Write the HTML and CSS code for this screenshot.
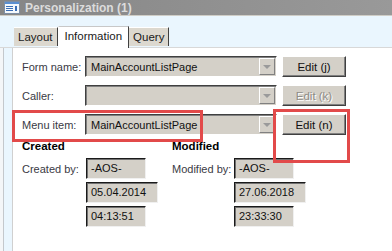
FILE: index.html
```html
<!DOCTYPE html>
<html lang="en">
<head>
    <meta charset="UTF-8">
    <title>Personalization (1)</title>
    <link rel="stylesheet" href="styles.css">
</head>
<body>
    <div class="window">
        <div class="titlebar">
            <svg class="app-icon" width="16" height="13" viewBox="0 0 16 13">
                <rect x="0.5" y="0.5" width="15" height="12" fill="#f4f8fc" stroke="#7d8ea4"/>
                <rect x="1" y="1" width="14" height="2" fill="#5b8fd0"/>
                <rect x="2" y="5" width="7" height="1" fill="#3a6fb8"/>
                <rect x="2" y="7" width="7" height="1" fill="#3a6fb8"/>
                <rect x="2" y="9" width="7" height="1" fill="#3a6fb8"/>
                <rect x="11" y="5" width="2" height="5" fill="#3a6fb8"/>
            </svg>
            <span class="title">Personalization (1)</span>
        </div>

        <div class="tabstrip">
            <div class="tab">Layout</div>
            <div class="tab active">Information</div>
            <div class="tab">Query</div>
        </div>

        <div class="main">
            <div class="rail"></div>
            <div class="panel">
                <div class="row">
                    <span class="label">Form name:</span>
                    <div class="combo"><span class="combo-text">MainAccountListPage</span><span class="drop"><i></i></span></div>
                    <div class="btn">Edit (j)</div>
                </div>
                <div class="row">
                    <span class="label">Caller:</span>
                    <div class="combo"><span class="combo-text"></span><span class="drop"><i></i></span></div>
                    <div class="btn disabled">Edit (k)</div>
                </div>
                <div class="row">
                    <span class="label">Menu item:</span>
                    <div class="combo"><span class="combo-text">MainAccountListPage</span><span class="drop"><i></i></span></div>
                    <div class="btn">Edit (n)</div>
                </div>

                <div class="stamps">
                    <div class="stamp">
                        <div class="stamp-title">Created</div>
                        <div class="stamp-row">
                            <span class="stamp-label">Created by:</span>
                            <div class="field">-AOS-</div>
                        </div>
                        <div class="stamp-row">
                            <span class="stamp-label"></span>
                            <div class="field wide">05.04.2014</div>
                        </div>
                        <div class="stamp-row">
                            <span class="stamp-label"></span>
                            <div class="field">04:13:51</div>
                        </div>
                    </div>
                    <div class="stamp">
                        <div class="stamp-title">Modified</div>
                        <div class="stamp-row">
                            <span class="stamp-label">Modified by:</span>
                            <div class="field">-AOS-</div>
                        </div>
                        <div class="stamp-row">
                            <span class="stamp-label"></span>
                            <div class="field wide">27.06.2018</div>
                        </div>
                        <div class="stamp-row">
                            <span class="stamp-label"></span>
                            <div class="field">23:33:30</div>
                        </div>
                    </div>
                </div>

                <div class="mark mark-menu"></div>
                <div class="mark mark-edit"></div>
            </div>
        </div>
    </div>
</body>
</html>
```

FILE: styles.css
```css
body {
    margin: 0;
    padding: 0;
    font-family: 'Liberation Sans', Arial, sans-serif;
    font-size: 11px;
    color: #1a1a1a;
    overflow: hidden;
}
.window {
    width: 392px;
    height: 251px;
    background: #ffffff;
    overflow: hidden;
}
.titlebar {
    height: 16px;
    background: linear-gradient(90deg, #868686 0%, #999999 100%);
    border-bottom: 1px solid #cfcdc6;
    display: flex;
    align-items: center;
    gap: 5px;
    padding-left: 4px;
    box-sizing: border-box;
}
.app-icon {
    flex: none;
}
.title {
    font-weight: bold;
    font-size: 12px;
    color: #dcdcdc;
}
.tabstrip {
    height: 32px;
    background: #eaf6fe;
    display: flex;
    align-items: flex-end;
    padding-left: 14px;
    border-bottom: 1px solid #d8d8d8;
    box-sizing: border-box;
}
.tab {
    height: 18px;
    line-height: 18px;
    padding: 0 4px;
    margin-bottom: 1px;
    background: #dcd8cf;
    border-top: 1px solid #ffffff;
    border-right: 1px solid #404040;
    color: #1a1a1a;
    font-size: 11.5px;
}
.tab.active {
    height: 21px;
    line-height: 19px;
    margin-bottom: -1px;
    padding: 0 6px;
    background: #ffffff;
    border-top: 1px solid #c8c8c8;
    border-left: 1px solid #ffffff;
    position: relative;
    z-index: 1;
}
.main {
    display: flex;
    height: 203px;
}
.rail {
    width: 12px;
    flex: none;
    background: #eaf6fe;
    border-left: 3px solid #f4f6f8;
    box-shadow: inset 1px 0 0 #c4c8cc;
    box-sizing: border-box;
}
.panel {
    flex: 1;
    border-left: 1px solid #d0d0d0;
    padding: 8px 0 0 9px;
    position: relative;
}
.row {
    display: flex;
    align-items: center;
    height: 21px;
    margin-bottom: 8px;
}
.label {
    flex: none;
    width: 63px;
    white-space: nowrap;
    color: #3a3a44;
    font-size: 11px;
}
.combo {
    flex: none;
    width: 192px;
    height: 21px;
    box-sizing: border-box;
    display: flex;
    align-items: center;
    background: #d4d0c8;
    border: 1px solid;
    border-color: #404040 #ffffff #ffffff #404040;
    box-shadow: inset 1px 1px 0 #808080;
}
.combo-text {
    flex: 1;
    padding-left: 5px;
    font-size: 11px;
    white-space: nowrap;
    color: #111;
}
.drop {
    flex: none;
    width: 16px;
    height: 17px;
    margin-right: 1px;
    box-sizing: border-box;
    background: #d4d0c8;
    border: 1px solid;
    border-color: #ffffff #808080 #808080 #ffffff;
    display: flex;
    align-items: center;
    justify-content: center;
}
.drop i {
    width: 0;
    height: 0;
    border-left: 4px solid transparent;
    border-right: 4px solid transparent;
    border-top: 4px solid #9a9a9a;
}
.btn {
    flex: none;
    margin-left: 5px;
    width: 64px;
    height: 21px;
    box-sizing: border-box;
    background: #d4d0c8;
    border: 1px solid;
    border-color: #ffffff #404040 #404040 #ffffff;
    box-shadow: inset -1px -1px 0 #808080;
    display: flex;
    align-items: center;
    justify-content: center;
    font-size: 11.5px;
    color: #111;
}
.btn.disabled {
    color: #8f8c86;
    text-shadow: 1px 1px 0 #ffffff;
}
.stamps {
    display: flex;
    margin-top: -3px;
}
.stamp {
    flex: none;
    width: 150px;
}
.stamp-title {
    font-weight: bold;
    font-size: 11.5px;
    color: #000;
    height: 14px;
    margin-bottom: 4px;
}
.stamp-row {
    display: flex;
    align-items: center;
    height: 21px;
    margin-bottom: 3px;
}
.stamp-label {
    flex: none;
    width: 64px;
    white-space: nowrap;
    color: #3a3a44;
    font-size: 11px;
}
.stamp + .stamp .stamp-label {
    width: 62px;
}
.field {
    flex: none;
    width: 60px;
    height: 21px;
    box-sizing: border-box;
    padding-left: 4px;
    line-height: 18px;
    font-size: 11px;
    white-space: nowrap;
    color: #111;
    background: #d4d0c8;
    border: 1px solid;
    border-color: #1a1a1a #f0f0f0 #f0f0f0 #1a1a1a;
    box-shadow: inset 1px 1px 0 #707070;
}
.field.wide {
    width: 72px;
}
.mark {
    position: absolute;
    border: 3px solid #e24a4a;
    box-sizing: border-box;
}
.mark-menu {
    left: -1px;
    top: 62px;
    width: 191px;
    height: 32px;
}
.mark-edit {
    left: 260px;
    top: 61px;
    width: 77px;
    height: 54px;
}
```
